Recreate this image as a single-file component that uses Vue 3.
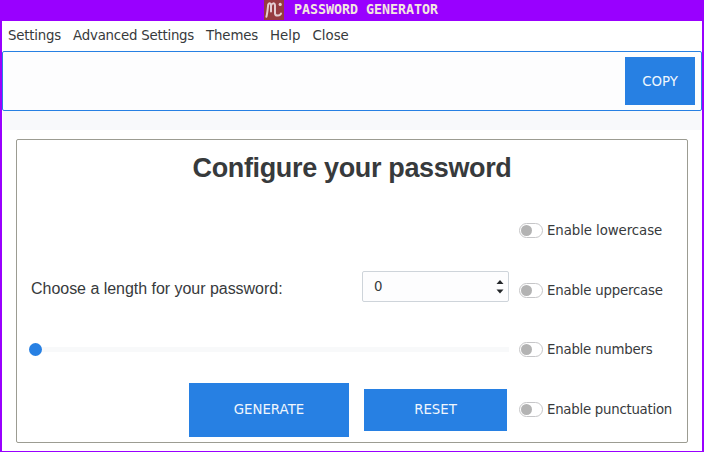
<script setup>
import { ref } from 'vue'

const menus = [
  { text: 'Settings', tracking: -0.2 },
  { text: 'Advanced Settings', tracking: -0.22 },
  { text: 'Themes', tracking: -0.15 },
  { text: 'Help', tracking: 0 },
  { text: 'Close', tracking: 0 },
]
const length = ref(0)
const options = [
  { text: 'lowercase', tracking: -0.08 },
  { text: 'uppercase', tracking: -0.2 },
  { text: 'numbers', tracking: -0.22 },
  { text: 'punctuation', tracking: -0.26 },
]
</script>

<template>
  <div class="window">
    <header class="titlebar">
      <svg class="logo" viewBox="0 0 20 20">
        <rect width="20" height="20" fill="#963c40" />
        <path d="M2.4 16.8C3.4 13 3.8 8 4.2 4.4C5.4 2.4 7 3.4 7 6V11.5M7 6C7.6 2.8 10.8 2.4 11 5.4V13.6C11.4 16.6 16.4 16 17 13.4" fill="none" stroke="#e4ccd0" stroke-width="2" stroke-linecap="round" stroke-linejoin="round" />
        <circle cx="16.2" cy="4.4" r="1.6" fill="#e4ccd0" />
      </svg>
      <h1>PASSWORD GENERATOR</h1>
    </header>
    <nav class="menubar">
      <span v-for="m in menus" :key="m.text" :style="{ letterSpacing: m.tracking + 'px' }">{{ m.text }}</span>
    </nav>
    <section class="output">
      <button class="btn copy">COPY</button>
    </section>
    <div class="band"></div>
    <main class="panel">
      <h2>Configure your password</h2>
      <div class="body">
        <div class="controls">
          <div class="length">
            <span class="prompt">Choose a length for your password:</span>
            <div class="spin">
              <span>{{ length }}</span>
              <svg class="arrows" viewBox="0 0 8 16">
                <path d="M0.5 5L4 1L7.5 5ZM0.5 10.5L4 14.5L7.5 10.5Z" fill="#24272a" />
              </svg>
            </div>
          </div>
          <div class="slider"><i class="thumb"></i></div>
          <div class="actions">
            <button class="btn generate">GENERATE</button>
            <button class="btn reset">RESET</button>
          </div>
        </div>
        <div class="options">
          <label v-for="o in options" :key="o.text">
            <span class="toggle"><i></i></span>
            <span :style="{ letterSpacing: o.tracking + 'px' }">Enable {{ o.text }}</span>
          </label>
        </div>
      </div>
    </main>
  </div>
</template>

<style>
body { margin: 0; overflow: hidden; }
</style>

<style scoped>
* { box-sizing: border-box; }
.window {
  width: 704px; height: 452px;
  display: flex; flex-direction: column;
  background: #fff; color: #373a3c;
  border: 2px solid #9900ff; border-top: 0; border-bottom-width: 1px;
  font: 13.33px "DejaVu Sans", sans-serif;
}
.titlebar {
  height: 21px; flex: none; background: #9900ff;
  display: flex; align-items: flex-start; padding-left: 262px; gap: 10px;
}
.logo { width: 20px; height: 20px; }
h1 {
  margin: 0; color: #f4e6e0; white-space: nowrap;
  font: bold 13.33px/19px "DejaVu Sans Mono", monospace;
  letter-spacing: -0.03px;
}
.menubar {
  height: 30px; flex: none; display: flex; gap: 12px;
  padding-left: 6px; line-height: 29px; white-space: nowrap;
}
.output {
  height: 60px; flex: none; display: flex; justify-content: flex-end; align-items: center;
  padding: 0 6px 0 0; background: #fdfdfe;
  border: 1px solid #2780e3; border-radius: 2px;
}
.btn {
  border: 0; padding: 0; background: #2780e3; color: #f0f6fd;
  font: 13.33px "DejaVu Sans", sans-serif;
}
.copy { width: 70px; height: 48px; }
.band { height: 19px; flex: none; margin-left: 1px; background: #f8f9fb; }
.panel {
  width: 672px; height: 304px; margin: 9px 0 0 14px; flex: none;
  border: 1px solid #9c9c92; border-radius: 2px;
}
h2 {
  margin: 0; height: 60px; text-align: center;
  font: bold 27px/56px "Liberation Sans", sans-serif;
  letter-spacing: -0.35px;
}
.body { display: grid; grid-template-columns: 502px 1fr; height: 239px; }
.controls { padding: 60px 10px 0 12px; display: grid; grid-template-rows: 60px 60px 59px; }
.length { display: flex; justify-content: space-between; padding-left: 2px; }
.prompt { font: 16px/57px "Liberation Sans", sans-serif; letter-spacing: -0.03px; }
.spin {
  width: 147px; height: 31px; margin-top: 11px; padding: 0 4px 0 11px;
  display: flex; justify-content: space-between; align-items: center;
  border: 1px solid #ced4da; border-radius: 2px; background: #fdfdfe;
}
.arrows { width: 8px; height: 16px; }
.slider { height: 5px; margin-top: 27px; background: #f8f9fa; display: flex; align-items: center; }
.thumb { width: 13px; height: 13px; border-radius: 50%; background: #2780e3; }
.actions { display: flex; justify-content: flex-end; align-items: center; gap: 15px; padding-right: 2px; }
.generate { width: 160px; height: 54px; }
.reset { width: 143px; height: 42px; }
.options { display: grid; grid-template-rows: 61px 59px 59px 60px; }
label { display: flex; align-items: center; gap: 4px; white-space: nowrap; }
.toggle {
  width: 24px; height: 15px; padding-left: 1px; display: flex; align-items: center;
  border: 1px solid #c6c6c8; border-radius: 8px;
}
.toggle i { width: 11px; height: 11px; border-radius: 50%; background: #b3b3b3; }
</style>
